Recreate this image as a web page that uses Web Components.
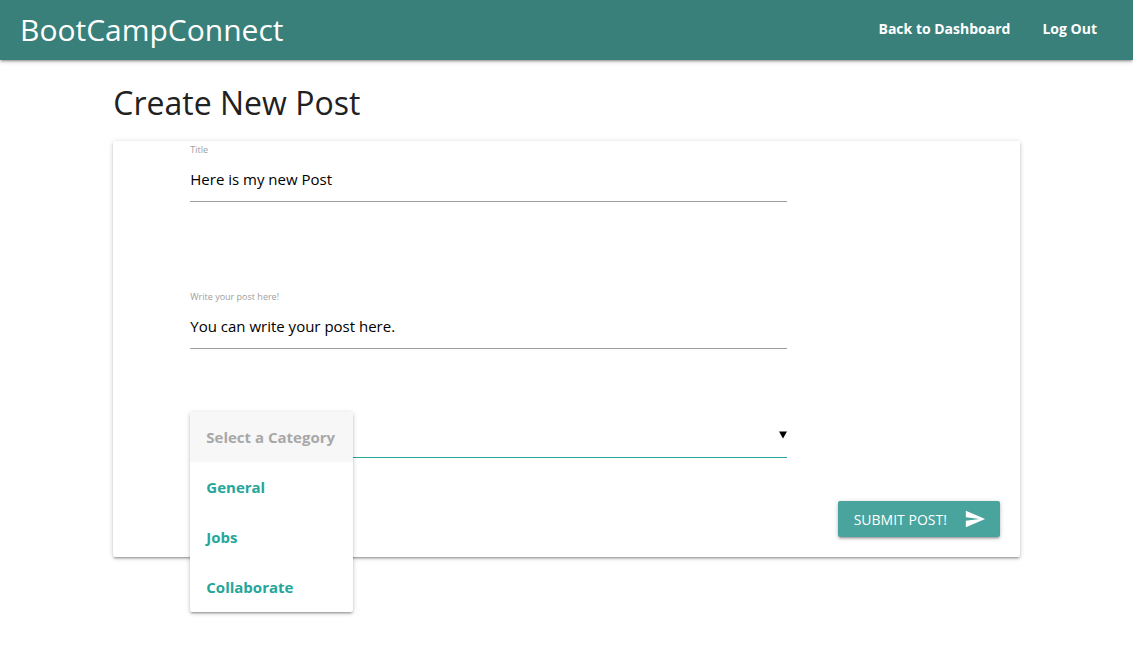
<!DOCTYPE html>
<html lang="en">
<head>
<meta charset="utf-8">
<meta name="viewport" content="width=device-width, initial-scale=1">
<title>BootCampConnect</title>
<style>
  body { margin: 0; min-height: 100vh; background: #fff; color: #212121; font: 15px/24px "Open Sans", "Noto Sans", sans-serif; --shadow: 0 2px 2px rgba(0,0,0,.14), 0 3px 1px -2px rgba(0,0,0,.12), 0 1px 5px rgba(0,0,0,.2); }
</style>
</head>
<body>
<site-header>
  <nav-link href="#dashboard">Back to Dashboard</nav-link>
  <nav-link href="#logout">Log Out</nav-link>
</site-header>
<post-page heading="Create New Post">
  <text-field label="Title" value="Here is my new Post"></text-field>
  <text-field label="Write your post here!" value="You can write your post here."></text-field>
  <category-select></category-select>
  <submit-button slot="action">SUBMIT POST!</submit-button>
</post-page>
<script>
class BaseElement extends HTMLElement {
  render(html) {
    this.attachShadow({ mode: "open" }).innerHTML = html;
  }
}

customElements.define("site-header", class extends BaseElement {
  connectedCallback() {
    this.render(`
      <style>
        :host { display: block; }
        header { display: flex; align-items: center; justify-content: space-between; height: 60px; padding: 0 20px; background: #39807a; box-shadow: var(--shadow); }
        .brand { color: #fff; text-decoration: none; font-size: 30px; line-height: 60px; }
        nav { display: flex; }
      </style>
      <header><a class="brand" href="#home">BootCampConnect</a><nav><slot></slot></nav></header>`);
  }
});

customElements.define("nav-link", class extends BaseElement {
  connectedCallback() {
    this.render(`
      <style>
        :host { display: block; }
        a { display: block; padding: 0 16px 2px; color: #fff; font-size: 14px; font-weight: 700; line-height: 56px; text-decoration: none; }
      </style>
      <a href="${this.getAttribute("href")}"><slot></slot></a>`);
  }
});

customElements.define("post-page", class extends BaseElement {
  connectedCallback() {
    this.render(`
      <style>
        :host { display: block; width: 80%; margin: 0 auto; }
        h1 { margin: 0; padding: 21px 0 16px; font-size: 32px; line-height: 44px; font-weight: 400; }
        form { display: block; border-radius: 2px; box-shadow: var(--shadow); padding: 0 20px 20px 0; }
        .fields { display: block; margin-left: 77px; width: 67.3%; }
        .actions { display: flex; justify-content: flex-end; padding-top: 43px; }
      </style>
      <h1>${this.getAttribute("heading")}</h1>
      <form>
        <div class="fields"><slot></slot></div>
        <div class="actions"><slot name="action"></slot></div>
      </form>`);
  }
});

customElements.define("text-field", class extends BaseElement {
  connectedCallback() {
    this.render(`
      <style>
        :host { display: block; height: 147px; }
        label { display: block; color: #9e9e9e; font-size: 9px; line-height: 17px; }
        input { display: block; box-sizing: border-box; width: 100%; height: 44px; margin: 0; padding: 0 0 2px; border: 0; border-bottom: 1px solid #9e9e9e; background: transparent; color: #000; font: 400 15px "Open Sans", sans-serif; outline: none; }
      </style>
      <label for="field">${this.getAttribute("label")}</label>
      <input id="field" type="text" value="${this.getAttribute("value")}">`);
  }
});

customElements.define("category-select", class extends BaseElement {
  connectedCallback() {
    this.render(`
      <style>
        :host { display: block; position: relative; margin-top: -23px; }
        .trigger { display: flex; align-items: center; justify-content: flex-end; box-sizing: border-box; width: 100%; height: 46px; padding: 0; border: 0; border-bottom: 1px solid #26a69a; background: none; }
        svg { display: block; width: 8px; height: 8px; fill: #000; }
        select { position: absolute; z-index: 1; top: 0; left: 0; min-width: 163px; height: 200px; margin: 0; padding: 0; border: 0; border-radius: 2px; overflow: hidden; appearance: none; background: #fff; outline: none; font: 700 15px "Open Sans", sans-serif; box-shadow: var(--shadow); }
        option { display: block; box-sizing: border-box; height: 50px; padding: 15px 16px 0; color: #26a69a; font-weight: 700; }
        option:disabled { color: #a8a8a8; background: #f7f7f7; }
      </style>
      <button class="trigger" type="button" aria-label="Open category list" aria-expanded="true"><svg viewBox="0 0 8 8" aria-hidden="true"><path d="M0 0.5h8L4 7.5z"/></svg></button>
      <select size="4" aria-label="Category">
        <option disabled>Select a Category</option>
        <option>General</option>
        <option>Jobs</option>
        <option>Collaborate</option>
      </select>`);
  }
});

customElements.define("submit-button", class extends BaseElement {
  connectedCallback() {
    this.render(`
      <style>
        :host { display: block; }
        button { display: flex; align-items: center; justify-content: space-between; min-width: 162px; height: 36px; padding: 0 14px 0 16px; border: 0; border-radius: 2px; background: #49a49e; color: #fff; font: 400 14px "Open Sans", sans-serif; box-shadow: var(--shadow); }
        svg { display: block; width: 22px; height: 22px; fill: #fff; }
      </style>
      <button type="submit"><slot></slot><svg viewBox="0 0 24 24" aria-hidden="true"><path d="M2.01 21L23 12 2.01 3 2 10l15 2-15 2z"/></svg></button>`);
  }
});
</script>
</body>
</html>
